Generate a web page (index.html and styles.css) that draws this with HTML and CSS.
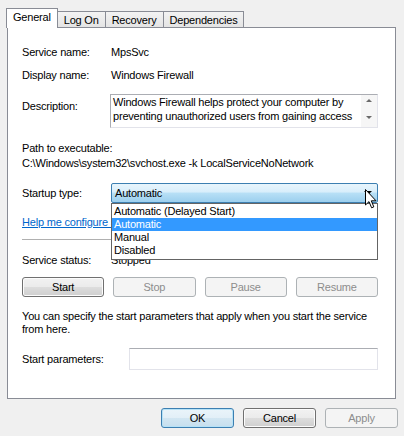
FILE: index.html
```html
<!DOCTYPE html>
<html lang="en">
<head>
  <meta charset="UTF-8" />
  <title>Windows Firewall Properties</title>
  <link rel="stylesheet" href="styles.css">
</head>
<body>
  <div class="dialog">
    <div class="tabs">
      <div class="tab active">General</div>
      <div class="tab">Log On</div>
      <div class="tab">Recovery</div>
      <div class="tab">Dependencies</div>
    </div>

    <div class="panel">
      <div class="row first">
        <span class="label">Service name:</span>
        <span>MpsSvc</span>
      </div>
      <div class="row">
        <span class="label">Display name:</span>
        <span>Windows Firewall</span>
      </div>
      <div class="row desc-row">
        <span class="label">Description:</span>
        <div class="textbox">
          <div class="desc-text">Windows Firewall helps protect your computer by preventing unauthorized users from gaining access to your computer through the Internet or a network.</div>
          <div class="scroll">
            <span class="arrow-up"></span>
            <span class="arrow-down"></span>
          </div>
        </div>
      </div>
      <div class="path-label">Path to executable:</div>
      <div class="path">C:\Windows\system32\svchost.exe -k LocalServiceNoNetwork</div>

      <div class="row startup-row">
        <span class="label">Startup type:</span>
        <div class="combo-wrap">
          <div class="combo">
            <span>Automatic</span>
            <span class="combo-arrow"></span>
          </div>
          <ul class="dropdown">
            <li>Automatic (Delayed Start)</li>
            <li class="selected">Automatic</li>
            <li>Manual</li>
            <li>Disabled</li>
          </ul>
          <svg class="cursor" width="12" height="20" viewBox="0 0 12 20">
            <path d="M0.5 0.5 L0.5 16 L4 12.6 L6.6 18.8 L8.8 17.9 L6.3 11.8 L11 11.8 Z" fill="#fff" stroke="#000" stroke-width="1" stroke-linejoin="miter"/>
          </svg>
        </div>
      </div>

      <a class="help-link" href="#">Help me configure service startup options.</a>
      <div class="separator"></div>

      <div class="row status-row">
        <span class="label">Service status:</span>
        <span>Stopped</span>
      </div>

      <div class="actions">
        <button class="btn">Start</button>
        <button class="btn" disabled>Stop</button>
        <button class="btn" disabled>Pause</button>
        <button class="btn" disabled>Resume</button>
      </div>

      <p class="note">You can specify the start parameters that apply when you start the service from here.</p>

      <div class="row params-row">
        <span class="label wide">Start parameters:</span>
        <div class="input"></div>
      </div>
    </div>

    <div class="footer">
      <button class="btn default">OK</button>
      <button class="btn">Cancel</button>
      <button class="btn" disabled>Apply</button>
    </div>
  </div>
</body>
</html>
```

FILE: styles.css
```css
body {
  margin: 0;
  width: 404px;
  height: 436px;
  overflow: hidden;
  background: #f0f0f0;
  font-family: "Liberation Sans", Arial, sans-serif;
  font-size: 11px;
  letter-spacing: -0.2px;
  color: #000;
}
.dialog {
  padding-top: 8px;
}
.tabs {
  display: flex;
  align-items: flex-end;
  height: 20px;
  margin-left: 6px;
}
.tab {
  height: 16px;
  line-height: 17px;
  padding: 0 6px;
  margin-left: -1px;
  border: 1px solid #898c95;
  border-bottom: none;
  background: linear-gradient(#f3f3f3, #e3e3e3);
}
.tab:first-child {
  margin-left: 0;
}
.tab.active {
  position: relative;
  z-index: 2;
  height: 19px;
  line-height: 17px;
  padding: 0 6px;
  background: #fff;
}
.panel {
  position: relative;
  height: 370px;
  margin: -1px 8px 0 7px;
  padding: 0 17px 0 14px;
  border: 1px solid #898c95;
  background: #fff;
}
.row {
  display: flex;
  align-items: center;
  line-height: 14px;
  margin-top: 9px;
}
.row.first {
  margin-top: 17px;
}
.label {
  width: 89px;
  flex: none;
}
.label.wide {
  width: 107px;
}
.desc-row {
  align-items: flex-start;
  margin-top: 12px;
}
.desc-row .label {
  padding-top: 5px;
}
.textbox {
  display: flex;
  flex: 1;
  height: 32px;
  margin-left: -1px;
  border: 1px solid #e2e3ea;
  border-top-color: #abadb3;
  border-left-color: #abadb3;
}
.desc-text {
  flex: 1;
  height: 28px;
  overflow: hidden;
  padding: 0 2px;
  line-height: 14px;
}
.scroll {
  width: 16px;
  display: flex;
  flex-direction: column;
  align-items: center;
  justify-content: space-between;
  padding: 4px 0 8px;
  background: #f6f6f6;
}
.arrow-up, .arrow-down {
  width: 0;
  height: 0;
  border-left: 3px solid transparent;
  border-right: 3px solid transparent;
}
.arrow-up {
  border-bottom: 3px solid #6a6a6a;
}
.arrow-down {
  border-top: 3px solid #6a6a6a;
}
.path-label {
  line-height: 14px;
  margin-top: 13px;
}
.path {
  line-height: 14px;
  margin-top: 1px;
}
.startup-row {
  margin-top: 13px;
}
.combo-wrap {
  position: relative;
  flex: 1;
  z-index: 3;
}
.combo {
  display: flex;
  align-items: center;
  justify-content: space-between;
  height: 18px;
  padding: 0 5px 0 3px;
  border: 1px solid #3c7fb1;
  border-radius: 2px;
  background: linear-gradient(#e8f5fc 0%, #d8eefb 45%, #b8e0f6 50%, #9ccfee 100%);
}
.combo-arrow {
  width: 0;
  height: 0;
  border-left: 4px solid transparent;
  border-right: 4px solid transparent;
  border-top: 4px solid #000;
}
.dropdown {
  position: absolute;
  top: 20px;
  left: 0;
  right: 0;
  margin: 0;
  padding: 1px 0 2px;
  list-style: none;
  background: #fff;
  border: 1px solid #646464;
}
.dropdown li {
  height: 13px;
  line-height: 13px;
  padding: 0 2px;
}
.dropdown li.selected {
  background: #3399ff;
  color: #fff;
}
.cursor {
  position: absolute;
  left: 254px;
  top: 6px;
}
.help-link {
  display: block;
  margin-top: 12px;
  line-height: 14px;
  color: #0066cc;
}
.separator {
  height: 1px;
  margin-top: 10px;
  background: #b0b0b0;
}
.status-row {
  margin-top: 13px;
}
.actions {
  display: grid;
  grid-template-columns: repeat(4, 1fr);
  gap: 9px;
  margin-top: 10px;
}
.btn {
  height: 20px;
  padding: 0;
  font-family: inherit;
  font-size: 11px;
  letter-spacing: -0.2px;
  color: #000;
  border: 1px solid #707070;
  border-radius: 3px;
  background: linear-gradient(#f2f2f2 0%, #ebebeb 50%, #dddddd 51%, #cfcfcf 100%);
  box-shadow: inset 0 0 0 1px #fcfcfc;
}
.btn:disabled {
  color: #8d8d8d;
  border-color: #adb2b5;
  background: #f4f4f4;
  box-shadow: none;
}
.btn.default {
  border-color: #3c7fb1;
  box-shadow: inset 0 0 0 1px #b6e2f7;
  background: linear-gradient(#eaf4fa 0%, #e2eff7 50%, #d2e6f2 51%, #c6dfee 100%);
}
.note {
  margin: 13px 0 0;
  line-height: 13px;
}
.params-row {
  margin-top: 12px;
}
.input {
  flex: 1;
  height: 20px;
  border: 1px solid #e2e3ea;
  border-top-color: #abadb3;
}
.footer {
  display: flex;
  justify-content: flex-end;
  gap: 9px;
  margin-top: 9px;
  padding-right: 6px;
}
.footer .btn {
  width: 73px;
}
```
